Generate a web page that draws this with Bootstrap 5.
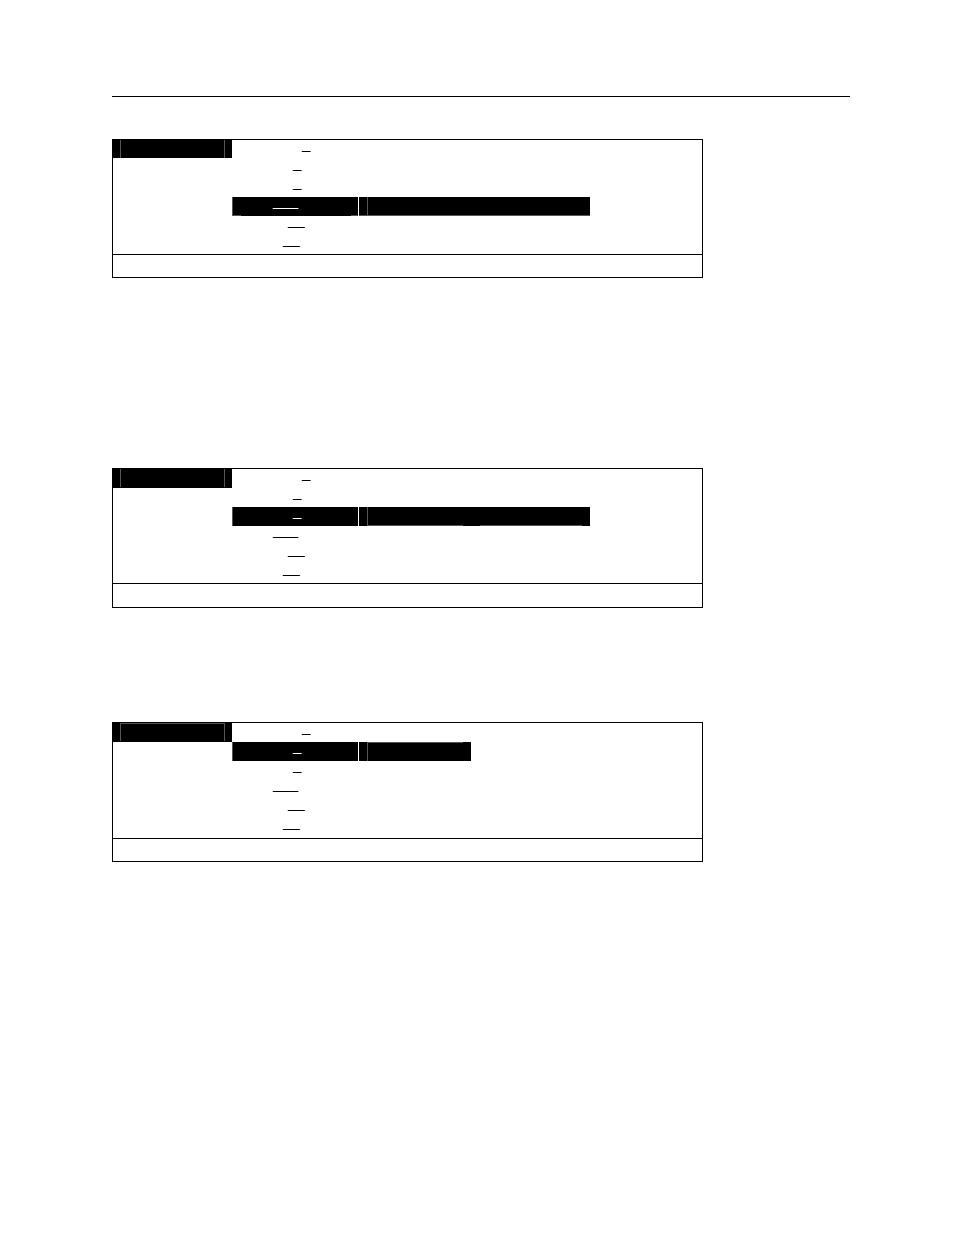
<!DOCTYPE html>
<html lang="en">
<head>
<meta charset="utf-8">
<meta name="viewport" content="width=device-width, initial-scale=1">
<title>Menu screens</title>
<link href="https://cdn.jsdelivr.net/npm/bootstrap@5.3.0/dist/css/bootstrap.min.css" rel="stylesheet">
<style>
body { font-family: "Liberation Sans", Arial, sans-serif; font-size: 15px; color: #000; background: #fff; }
.sheet { padding: 0 104px 0 112px; }
.sheet-head { height: 97px; border-bottom: 1px solid #000; margin-bottom: 42px; }
.screen { max-width: 591px; border: 1px solid #000; }
.screen-a { margin-bottom: 190px; }
.screen-b { margin-bottom: 114px; }
.menu { width: 100%; table-layout: fixed; border-collapse: collapse; line-height: 8px; }
.menu .c-title { width: 119px; }
.menu .c-item { width: 126px; }
.menu td { height: 19px; padding: 0; vertical-align: top; }
.status { height: 23px; border-top: 1px solid #000; }
.title-bar { height: 19px; background: #000; padding: 0 7px; }
.title-bar span { display: block; height: 18px; border: solid #555; border-width: 0 1px; }
.screen-a .title-bar { height: 18px; }
.screen-b .status { height: 24px; }
.screen-c .menu { margin-bottom: 1px; }
.screen-c .title-bar span { border-top-width: 1px; }
.k-1 { padding-left: 70px !important; }
.k-2 { padding-left: 61px !important; }
.k-3 { padding-left: 41px !important; }
.k-4 { padding-left: 56px !important; }
.k-5 { padding-left: 51px !important; }
.chosen { background: #000; color: #fff; box-shadow: inset 1px 0 #555; border-right: 1px solid #fff; }
.option-bar { height: 19px; background: #000; padding-left: 8px; }
.option-bar span { display: block; height: 19px; border-left: 1px solid #555; }
.wide { width: 231px; }
.short { width: 112px; }
.rule-full { border-bottom: 1px solid #555; }
.ends { background-image: linear-gradient(90deg, #555 9px, #000 9px, #000 119px, #555 119px); background-size: 100% 1px; background-position: bottom; background-repeat: no-repeat; }
.option-bar .rule-gap { margin-right: 8px; background: linear-gradient(90deg, #555 95px, #000 95px, #000 112px, #555 112px) bottom / 100% 1px no-repeat; }
.option-bar .rule-top { margin-right: 8px; border-top: 1px solid #555; }
</style>
</head>
<body>
<main class="sheet">
  <header class="sheet-head"></header>

  <section class="screen screen-a">
    <table class="menu">
      <colgroup><col class="c-title"><col class="c-item"><col></colgroup>
      <tbody>
        <tr><td><div class="title-bar"><span></span></div></td><td class="k-1">_</td><td></td></tr>
        <tr><td></td><td class="k-2">_</td><td></td></tr>
        <tr><td></td><td class="k-2">_</td><td></td></tr>
        <tr><td></td><td class="k-3 chosen ends">___</td><td><div class="option-bar wide rule-full"><span></span></div></td></tr>
        <tr><td></td><td class="k-4">__</td><td></td></tr>
        <tr><td></td><td class="k-5">__</td><td></td></tr>
      </tbody>
    </table>
    <div class="status"></div>
  </section>

  <section class="screen screen-b">
    <table class="menu">
      <colgroup><col class="c-title"><col class="c-item"><col></colgroup>
      <tbody>
        <tr><td><div class="title-bar"><span></span></div></td><td class="k-1">_</td><td></td></tr>
        <tr><td></td><td class="k-2">_</td><td></td></tr>
        <tr><td></td><td class="k-2 chosen">_</td><td><div class="option-bar wide"><span class="rule-gap"></span></div></td></tr>
        <tr><td></td><td class="k-3">___</td><td></td></tr>
        <tr><td></td><td class="k-4">__</td><td></td></tr>
        <tr><td></td><td class="k-5">__</td><td></td></tr>
      </tbody>
    </table>
    <div class="status"></div>
  </section>

  <section class="screen screen-c">
    <table class="menu">
      <colgroup><col class="c-title"><col class="c-item"><col></colgroup>
      <tbody>
        <tr><td><div class="title-bar"><span></span></div></td><td class="k-1">_</td><td></td></tr>
        <tr><td></td><td class="k-2 chosen">_</td><td><div class="option-bar short"><span class="rule-top"></span></div></td></tr>
        <tr><td></td><td class="k-2">_</td><td></td></tr>
        <tr><td></td><td class="k-3">___</td><td></td></tr>
        <tr><td></td><td class="k-4">__</td><td></td></tr>
        <tr><td></td><td class="k-5">__</td><td></td></tr>
      </tbody>
    </table>
    <div class="status"></div>
  </section>
</main>
<script src="https://cdn.jsdelivr.net/npm/bootstrap@5.3.0/dist/js/bootstrap.bundle.min.js"></script>
</body>
</html>
